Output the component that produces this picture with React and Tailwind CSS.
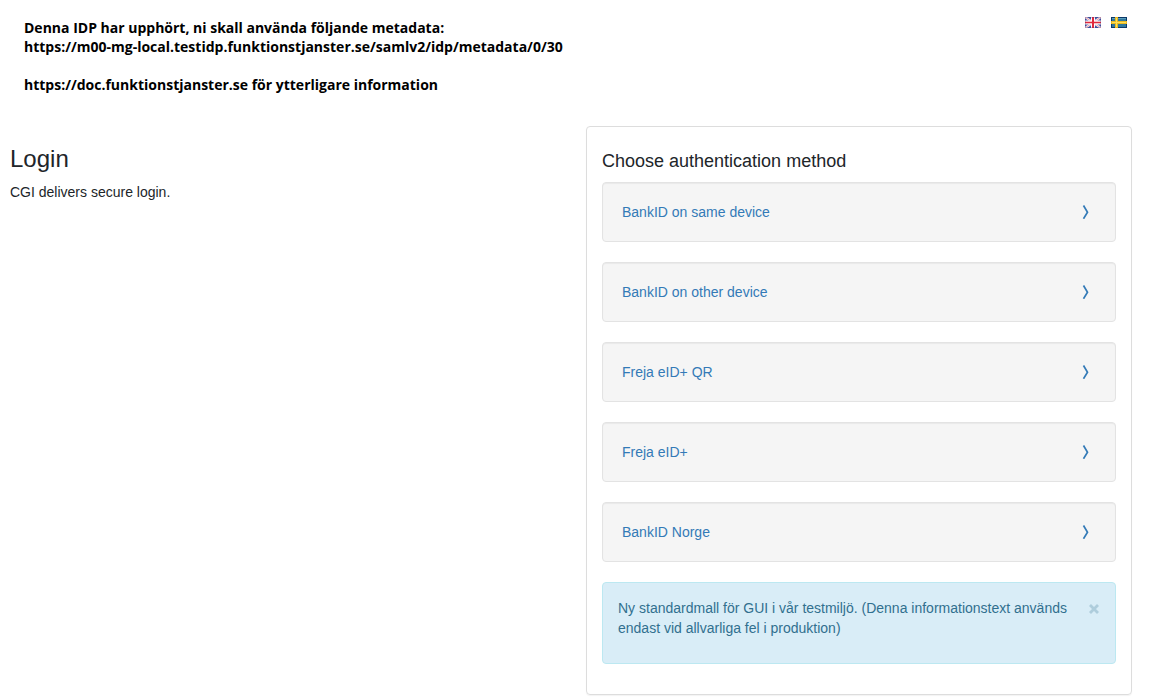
import { useState } from "react";

const methods = [
  "BankID on same device",
  "BankID on other device",
  "Freja eID+ QR",
  "Freja eID+",
  "BankID Norge",
];

function FlagGB() {
  return (
    <svg viewBox="0 0 16 11" className="block h-[11px] w-4" aria-hidden="true">
      <rect width="16" height="11" fill="#4058a6" />
      <path d="M0 0L16 11M16 0L0 11" stroke="#f6f0f6" strokeWidth="2.2" />
      <path d="M0 0L16 11M16 0L0 11" stroke="#e58a94" strokeWidth="0.8" />
      <path d="M8 0V11M0 5.5H16" stroke="#fff" strokeWidth="4" />
      <path d="M8 0V11" stroke="#e0283c" strokeWidth="2" />
      <path d="M0 5.5H16" stroke="#e0283c" strokeWidth="1.6" />
      <rect x="0.5" y="0.5" width="15" height="10" fill="none" stroke="#3a2870" strokeOpacity="0.25" />
    </svg>
  );
}

function FlagSE() {
  return (
    <svg viewBox="0 0 16 11" className="block h-[11px] w-4" shapeRendering="crispEdges" aria-hidden="true">
      <rect width="16" height="11" fill="#0b3868" />
      <rect x="1" y="1" width="14" height="9" fill="#2f789e" />
      <rect x="1" y="1" width="14" height="1" fill="#5b9dbb" />
      <path d="M4 0H7V11H4zM0 4H16V7H0z" fill="#e8b820" />
      <path d="M5 1H6V10H5zM1 5H15V6H1z" fill="#ffdf55" />
    </svg>
  );
}

function Method({ name }) {
  return (
    <a
      href="#"
      className="flex min-h-[60px] items-center justify-between rounded-[4px] border border-[#e3e3e3] bg-[#f5f5f5] pr-[26px] pl-[19px] text-[#337ab7] shadow-[inset_0_1px_1px_rgba(0,0,0,0.05)]"
    >
      <span>{name}</span>
      <svg viewBox="0 0 7 14" className="h-3.5 w-[7px]" fill="none" stroke="currentColor" strokeWidth="1.7" aria-hidden="true">
        <path d="M1.5 0.5L5.5 7.2L1.5 13.8" />
      </svg>
    </a>
  );
}

export default function App() {
  const [notice, setNotice] = useState(true);
  return (
    <div className="min-h-screen bg-white pr-[17px] pb-1 pl-[10px] font-['Liberation_Sans',Arial,sans-serif] text-[14px] leading-5 text-[#212529]">
      <header className="flex items-start justify-between">
        <div className="pt-[18px] pl-[14px] font-['Open_Sans','Liberation_Sans',sans-serif] text-[14px] leading-[19px] font-bold text-black">
          <p>Denna IDP har upphört, ni skall använda följande metadata:</p>
          <p className="pb-[19px]">https://m00-mg-local.testidp.funktionstjanster.se/samlv2/idp/metadata/0/30</p>
          <p>https://doc.funktionstjanster.se för ytterligare information</p>
        </div>
        <nav className="flex gap-[10px] pt-[17px] pr-[5px]">
          <a href="#" aria-label="English"><FlagGB /></a>
          <a href="#" aria-label="Svenska"><FlagSE /></a>
        </nav>
      </header>
      <main className="grid grid-cols-2 items-start gap-[30px] pt-8">
        <section className="pt-5">
          <h1 className="text-[24px] leading-[26px]">Login</h1>
          <p className="pt-[10px]">CGI delivers secure login.</p>
        </section>
        <section className="rounded-[4px] border border-[#ddd] px-[15px] pb-[30px] shadow-[0_1px_1px_rgba(0,0,0,0.05)]">
          <h2 className="pt-6 pb-[11px] text-[18px] leading-5">Choose authentication method</h2>
          <div className="flex flex-col gap-5">
            {methods.map((name) => (
              <Method key={name} name={name} />
            ))}
            {notice && (
              <div role="alert" className="flex items-start justify-between gap-4 rounded-[4px] border border-[#bce8f1] bg-[#d9edf7] px-[15px] pt-[15px] pb-[25px] text-[#31708f]">
                <p>Ny standardmall för GUI i vår testmiljö. (Denna informationstext används endast vid allvarliga fel i produktion)</p>
                <button
                  type="button"
                  aria-label="Close"
                  onClick={() => setNotice(false)}
                  className="flex h-5 w-3 shrink-0 items-center justify-center opacity-25"
                >
                  <svg viewBox="0 0 10 10" className="mt-0.5 h-2.5 w-2.5" stroke="currentColor" strokeWidth="2.8" aria-hidden="true">
                    <path d="M1 1L9 9M9 1L1 9" />
                  </svg>
                </button>
              </div>
            )}
          </div>
        </section>
      </main>
    </div>
  );
}
